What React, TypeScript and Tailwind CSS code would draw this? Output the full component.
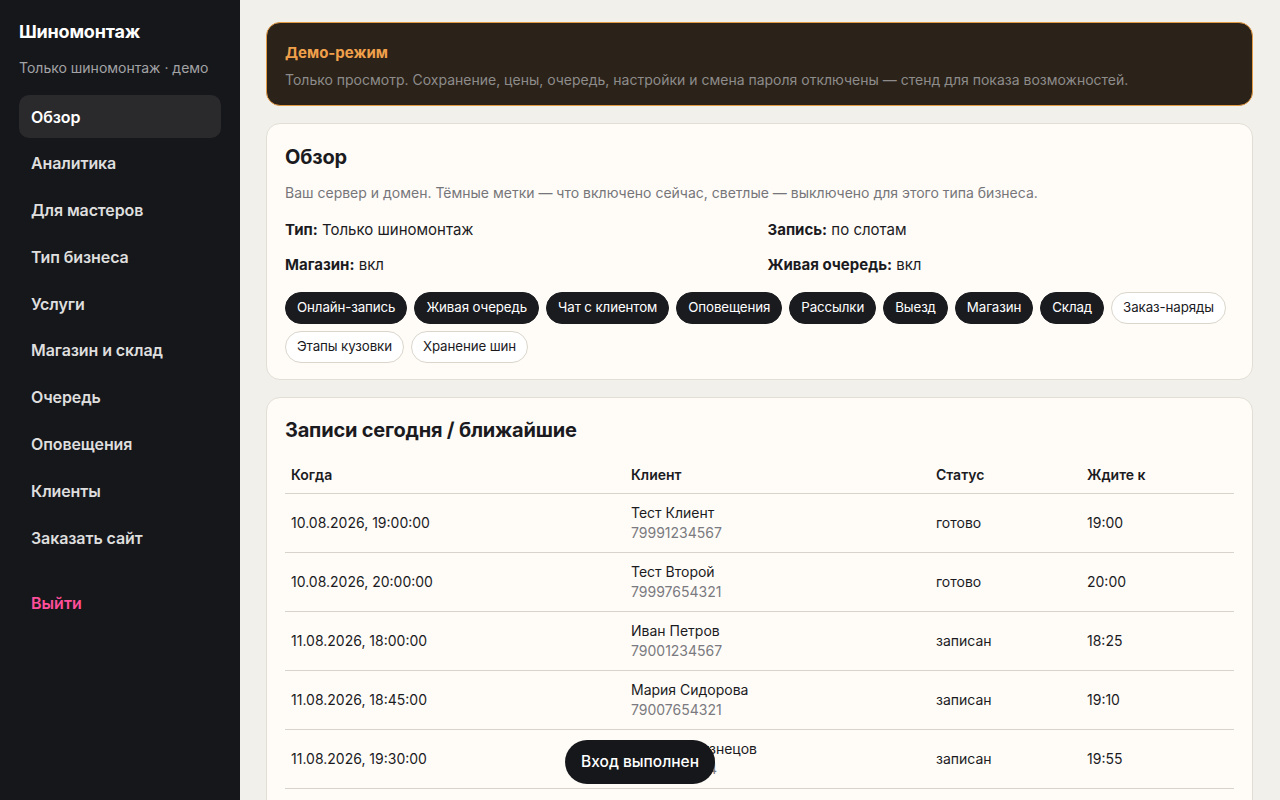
import React from "react";

const nav = [
  "Обзор",
  "Аналитика",
  "Для мастеров",
  "Тип бизнеса",
  "Услуги",
  "Магазин и склад",
  "Очередь",
  "Оповещения",
  "Клиенты",
  "Заказать сайт",
];

const chipsOn = ["Онлайн-запись", "Живая очередь", "Чат с клиентом", "Оповещения", "Рассылки", "Выезд", "Магазин", "Склад"];
const chipsOff = ["Заказ-наряды", "Этапы кузовки", "Хранение шин"];

const rows = [
  { when: "10.08.2026, 19:00:00", name: "Тест Клиент", phone: "79991234567", status: "готово", at: "19:00" },
  { when: "10.08.2026, 20:00:00", name: "Тест Второй", phone: "79997654321", status: "готово", at: "20:00" },
  { when: "11.08.2026, 18:00:00", name: "Иван Петров", phone: "79001234567", status: "записан", at: "18:25" },
  { when: "11.08.2026, 18:45:00", name: "Мария Сидорова", phone: "79007654321", status: "записан", at: "19:10" },
  { when: "11.08.2026, 19:30:00", name: "Алексей Кузнецов", phone: "79001112234", status: "записан", at: "19:55" },
  { when: "12.08.2026, 10:00:00", name: "Ольга Смирнова", phone: "79005556677", status: "записан", at: "10:25" },
];

export default function App() {
  return (
    <div
      className="flex h-screen w-full overflow-hidden bg-[#f2f0eb] text-[#1b1b1f]"
      style={{ fontFamily: "Inter, 'Noto Sans', sans-serif" }}
    >
      <aside className="flex w-[240px] shrink-0 flex-col bg-[#16171b] px-[19px] pt-[20px]">
        <div className="text-[18px] font-bold leading-[24px] text-white tracking-[-0.2px]">Шиномонтаж</div>
        <div className="mt-[14px] text-[14px] leading-[20px] text-[#a3a3a6]">Только шиномонтаж · демо</div>
        <nav className="mt-[17px] flex flex-col gap-[3.8px]">
          {nav.map((n, i) => (
            <div
              key={n}
              className={`flex h-[43px] items-center rounded-[10px] px-[12px] text-[16px] font-semibold tracking-[-0.1px] ${
                i === 0 ? "bg-[#2a2a2d] text-white" : "text-[#dedede]"
              }`}
            >
              {n}
            </div>
          ))}
        </nav>
        <div className="mt-[22px] flex h-[43px] items-center px-[12px] text-[16px] font-semibold text-[#ff4f9a]">Выйти</div>
      </aside>

      <main className="flex min-w-0 flex-1 flex-col gap-[17px] px-[26px] pt-[22px] pr-[27px]">
        <div className="rounded-[14px] border border-[#e39a45] bg-[#2b2219] px-[18px] pt-[19px] pb-[15px]">
          <div className="text-[15px] font-bold leading-[22px] text-[#f0a04b]">Демо-режим</div>
          <div className="mt-[6px] text-[14px] leading-[20px] text-[#8d8c8b]">
            Только просмотр. Сохранение, цены, очередь, настройки и смена пароля отключены — стенд для показа возможностей.
          </div>
        </div>

        <section className="rounded-[14px] border border-[#e1ded6] bg-[#fffcf7] px-[18px] pt-[20px] pb-[16px]">
          <h2 className="text-[20px] font-bold leading-[26px] tracking-[-0.2px]">Обзор</h2>
          <p className="mt-[13px] text-[14px] leading-[20px] text-[#76767a]">
            Ваш сервер и домен. Тёмные метки — что включено сейчас, светлые — выключено для этого типа бизнеса.
          </p>
          <div className="mt-[17px] grid grid-cols-2 gap-x-[16px] gap-y-[15px] text-[15px] leading-[20px]">
            <div><b className="font-bold">Тип:</b> Только шиномонтаж</div>
            <div><b className="font-bold">Запись:</b> по слотам</div>
            <div><b className="font-bold">Магазин:</b> вкл</div>
            <div><b className="font-bold">Живая очередь:</b> вкл</div>
          </div>
          <div className="mt-[17px] flex flex-wrap gap-x-[7px] gap-y-[7px]">
            {chipsOn.map((c) => (
              <span key={c} className="flex h-[32px] items-center rounded-full border border-[#1a1b1f] bg-[#1a1b1f] px-[11px] text-[13.3px] tracking-[-0.1px] text-white">
                {c}
              </span>
            ))}
            {chipsOff.map((c) => (
              <span key={c} className="flex h-[32px] items-center rounded-full border border-[#dad6cc] bg-white px-[11px] text-[13.3px] tracking-[-0.1px] text-[#1b1b1f]">
                {c}
              </span>
            ))}
          </div>
        </section>

        <section className="rounded-[14px] border border-[#e1ded6] bg-[#fffcf7] px-[18px] pt-[19px] pb-[20px]">
          <h2 className="text-[20px] font-bold leading-[26px] tracking-[-0.2px]">Записи сегодня / ближайшие</h2>
          <table className="mt-[15px] w-full border-collapse text-[14px]">
            <colgroup>
              <col className="w-[340px]" />
              <col className="w-[305px]" />
              <col className="w-[151px]" />
              <col />
            </colgroup>
            <thead>
              <tr className="border-b border-[#d8d4cb]">
                <th className="px-[6px] pt-[7px] pb-[8px] text-left font-semibold leading-[20px]">Когда</th>
                <th className="px-[6px] pt-[7px] pb-[8px] text-left font-semibold leading-[20px]">Клиент</th>
                <th className="px-[6px] pt-[7px] pb-[8px] text-left font-semibold leading-[20px]">Статус</th>
                <th className="px-[6px] pt-[7px] pb-[8px] text-left font-semibold leading-[20px]">Ждите к</th>
              </tr>
            </thead>
            <tbody>
              {rows.map((r) => (
                <tr key={r.when} className="border-b border-[#d8d4cb]">
                  <td className="px-[6px] py-[9px] leading-[20px]">{r.when}</td>
                  <td className="px-[6px] py-[9px] leading-[20px]">
                    <div>{r.name}</div>
                    <div className="text-[#7a7a80]">{r.phone}</div>
                  </td>
                  <td className="px-[6px] py-[9px] leading-[20px]">{r.status}</td>
                  <td className="px-[6px] py-[9px] leading-[20px]">{r.at}</td>
                </tr>
              ))}
            </tbody>
          </table>
        </section>
      </main>

      <div className="fixed bottom-[16px] left-1/2 flex h-[44px] -translate-x-1/2 items-center rounded-full bg-[#16171b] px-[16px] text-[15.5px] font-medium text-white">
        Вход выполнен
      </div>
    </div>
  );
}
